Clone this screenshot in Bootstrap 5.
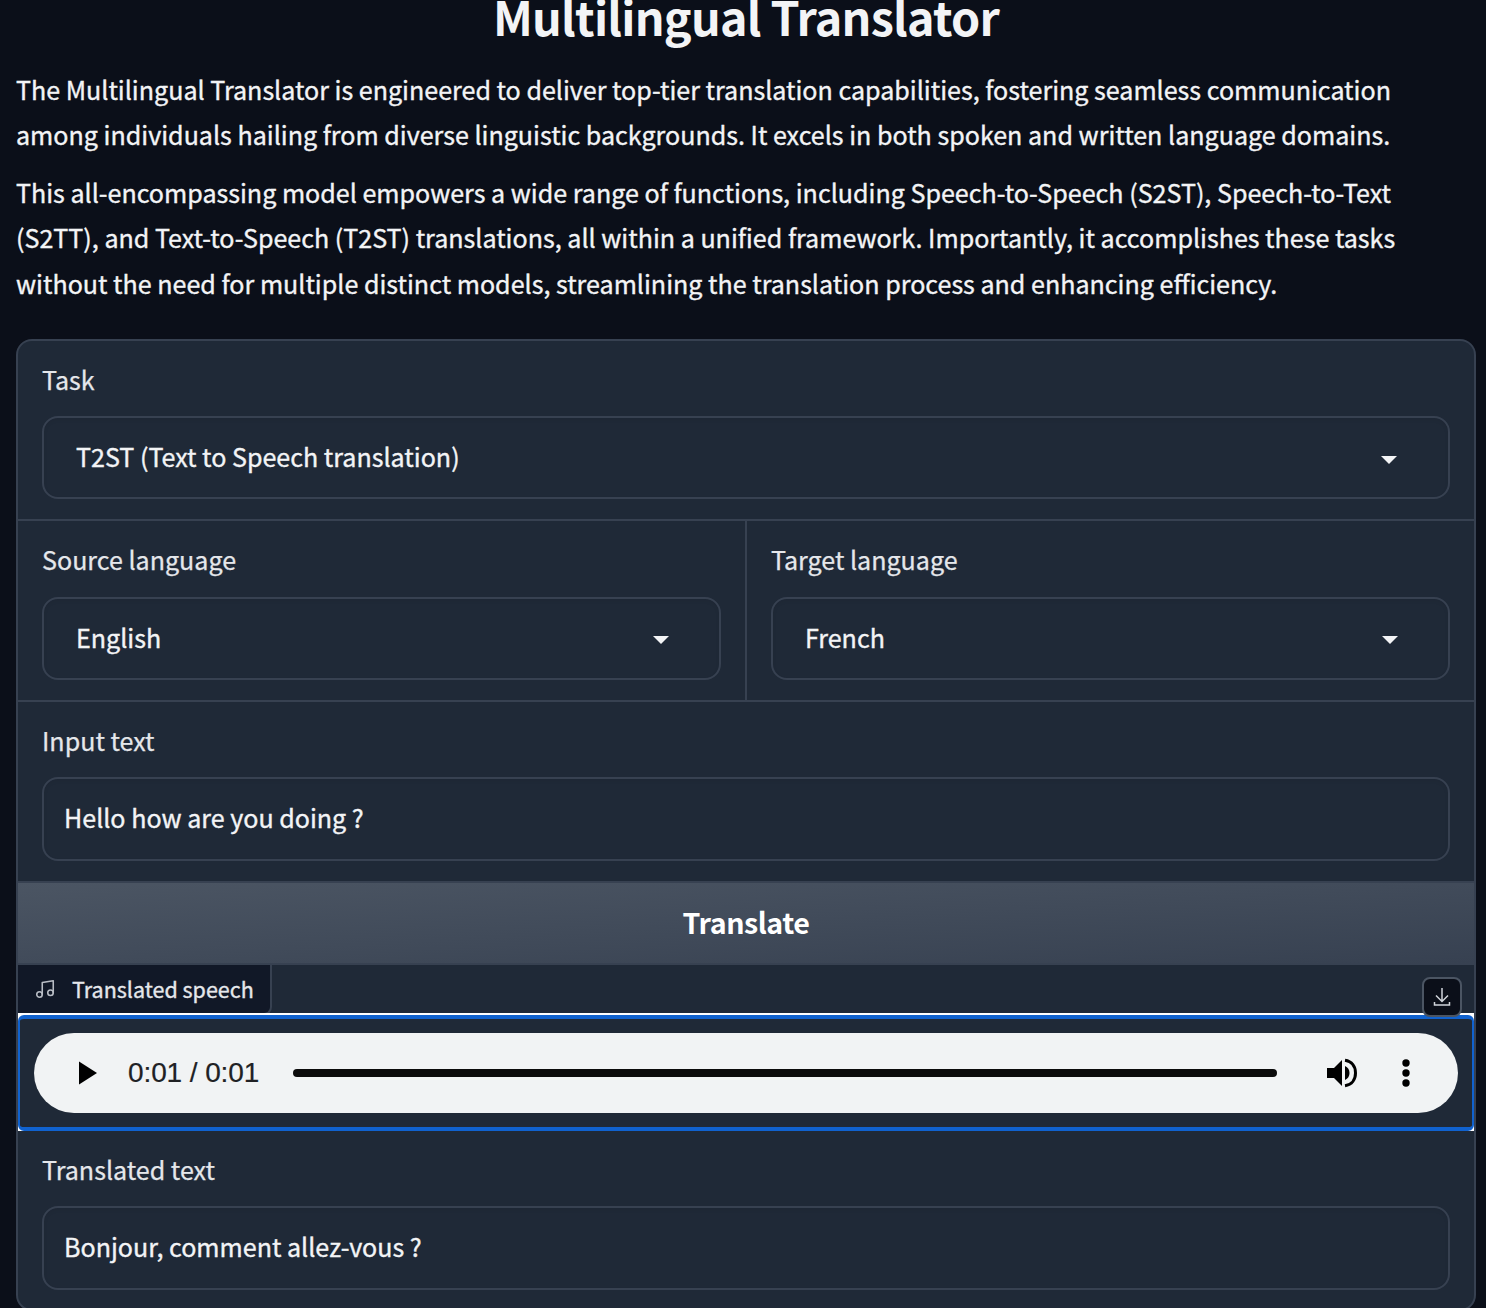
<!DOCTYPE html>
<html lang="en">
<head>
<meta charset="utf-8">
<meta name="viewport" content="width=device-width, initial-scale=1">
<title>Multilingual Translator</title>
<link rel="stylesheet" href="https://cdn.jsdelivr.net/npm/bootstrap@5.3.0/dist/css/bootstrap.min.css">
<style>
html, body { height: 1308px; overflow: hidden; }
body { background: #0b0f19; color: #f3f4f6; font-family: "Noto Sans CJK SC", "Noto Sans", sans-serif; font-size: 25.075px; line-height: 45.5px; -webkit-text-stroke: .35px currentColor; }
.page { padding: 0 10px 0 16px; }
.page-title { font-size: 46.7px; line-height: 31px; font-weight: 700; letter-spacing: -.77px; margin: 0 0 35.8px; -webkit-text-stroke: 0; }
.intro { margin-bottom: 12px; white-space: nowrap; }
.panel { background: #374151; border: 2px solid #374151; border-radius: 16px; margin-top: 32.7px; overflow: hidden; gap: 2px; }
.cell { background: #1f2937; padding: 17px 24px 20px; height: 178px; }
.cell-tall { height: 179px; }
.cell-label { color: #e5e7eb; line-height: 42px; margin-bottom: 16px; display: block; -webkit-text-stroke-width: .25px; }
.cell-pair .cell-label { margin-bottom: 17px; }
.field { border: 2px solid #374151; border-radius: 16px; height: 83px; padding: 0 50px 1px 32px; box-shadow: inset 0 2px 4px rgba(0,0,0,.05); }
.field-wide { padding-right: 51px; }
.field-text { padding-left: 20px; height: 84px; padding-bottom: 2px; }
.arrow { width: 16px; height: 8px; fill: #f3f4f6; margin-top: 6px; }
.cell-pair .arrow { margin-top: 4px; }
.btn-translate { height: 80px; background: linear-gradient(to bottom right, #4b5563, #374151); color: #fff; border: 0; border-radius: 0; font-size: 28.6px; font-weight: 700; letter-spacing: -.45px; padding: 0 0 1px; -webkit-text-stroke: 0; }
.speech-head { background: #1f2937; height: 48px; }
.speech-tag { background: #111827; border-right: 2px solid #374151; border-bottom: 2px solid #374151; border-bottom-right-radius: 8px; font-size: 21.5px; color: #e5e7eb; padding: 0 16px 0 16px; gap: 16px; height: 50px; }
.download { right: 12px; top: 12px; width: 40px; height: 40px; background: #0b0f19; border: 2px solid #4b5563; border-radius: 8px; z-index: 2; padding: 0; }
.focus-edge { background: #fff; padding-top: 2px; height: 118px; z-index: 1; }
.focus-ring-box { background: #1f2937; border: solid #1062cf; border-width: 4px 2px; border-radius: 6px; height: 116px; padding: 14px; }
.player { background: #f1f3f4; border-radius: 40px; height: 80px; color: #202124; font: 28px/80px "Liberation Sans", Arial, sans-serif; padding: 0 48px 0 45px; }
.time { margin-left: 31px; letter-spacing: -.1px; -webkit-text-stroke-width: .2px; }
.track { height: 8px; border-radius: 4px; background: #0b0b0b; margin: 0 50px 0 34px; }
.more { margin-left: 44px; }
</style>
</head>
<body>
<main class="page">
  <h1 class="page-title text-center">Multilingual Translator</h1>
  <p class="intro">The Multilingual Translator is engineered to deliver top-tier translation capabilities, fostering seamless communication<br>among individuals hailing from diverse linguistic backgrounds. It excels in both spoken and written language domains.</p>
  <p class="intro">This all-encompassing model empowers a wide range of functions, including Speech-to-Speech (S2ST), Speech-to-Text<br>(S2TT), and Text-to-Speech (T2ST) translations, all within a unified framework. Importantly, it accomplishes these tasks<br>without the need for multiple distinct models, streamlining the translation process and enhancing efficiency.</p>

  <section class="panel d-flex flex-column">
    <div class="cell">
      <span class="cell-label">Task</span>
      <div class="field field-wide d-flex align-items-center justify-content-between"><span>T2ST (Text to Speech translation)</span><svg class="arrow" viewBox="0 0 16 8"><path d="M0 0h16L8 8z"/></svg></div>
    </div>
    <div class="cell-pair d-flex" style="gap:2px">
      <div class="cell cell-tall flex-fill w-50">
        <span class="cell-label">Source language</span>
        <div class="field d-flex align-items-center justify-content-between"><span>English</span><svg class="arrow" viewBox="0 0 16 8"><path d="M0 0h16L8 8z"/></svg></div>
      </div>
      <div class="cell cell-tall flex-fill w-50">
        <span class="cell-label">Target language</span>
        <div class="field d-flex align-items-center justify-content-between"><span>French</span><svg class="arrow" viewBox="0 0 16 8"><path d="M0 0h16L8 8z"/></svg></div>
      </div>
    </div>
    <div class="cell cell-tall">
      <span class="cell-label">Input text</span>
      <div class="field field-text d-flex align-items-center">Hello how are you doing ?</div>
    </div>
    <button class="btn btn-translate w-100" type="button">Translate</button>
    <div>
      <div class="speech-head position-relative d-flex align-items-start">
        <div class="speech-tag d-flex align-items-center">
          <svg width="22" height="22" viewBox="0 0 24 24" fill="none" stroke="#b9bdc5" stroke-width="1.7" stroke-linecap="round" stroke-linejoin="round"><path d="M9 18V5l12-2v13"/><circle cx="6" cy="18" r="3"/><circle cx="18" cy="16" r="3"/></svg>
          <span>Translated speech</span>
        </div>
        <button class="download position-absolute d-flex align-items-center justify-content-center" type="button" aria-label="Download"><svg width="18" height="20" viewBox="0 0 18 20" fill="none" stroke="#d1d5db" stroke-width="1.5"><path d="M9 1v13M3 8.500l6 6 6-6M1.500 15v3h15v-3"/></svg></button>
      </div>
      <div class="focus-edge position-relative">
        <div class="focus-ring-box">
          <div class="player d-flex align-items-center">
            <svg width="18" height="24" viewBox="0 0 18 24"><path d="M0 0.500v23l18-11.500z"/></svg>
            <span class="time text-nowrap">0:01 / 0:01</span>
            <div class="track flex-grow-1"></div>
            <svg width="31" height="30" viewBox="0 0 31 30"><path d="M0 10h7l8-8v26l-8-8H0zM18 8q4.500 2 4.500 7T18 22z"/><path d="M18 2.200c7 1 10.500 6.500 10.500 12.800S25 26.800 18 27.800" fill="none" stroke="#000" stroke-width="3"/></svg>
            <svg class="more" width="8" height="28" viewBox="0 0 8 28"><circle cx="4" cy="4" r="3.700"/><circle cx="4" cy="14" r="3.700"/><circle cx="4" cy="24" r="3.700"/></svg>
          </div>
        </div>
      </div>
      <div class="cell">
        <span class="cell-label">Translated text</span>
        <div class="field field-text d-flex align-items-center">Bonjour, comment allez-vous ?</div>
      </div>
    </div>
  </section>
</main>
<script src="https://cdn.jsdelivr.net/npm/bootstrap@5.3.0/dist/js/bootstrap.bundle.min.js"></script>
</body>
</html>
